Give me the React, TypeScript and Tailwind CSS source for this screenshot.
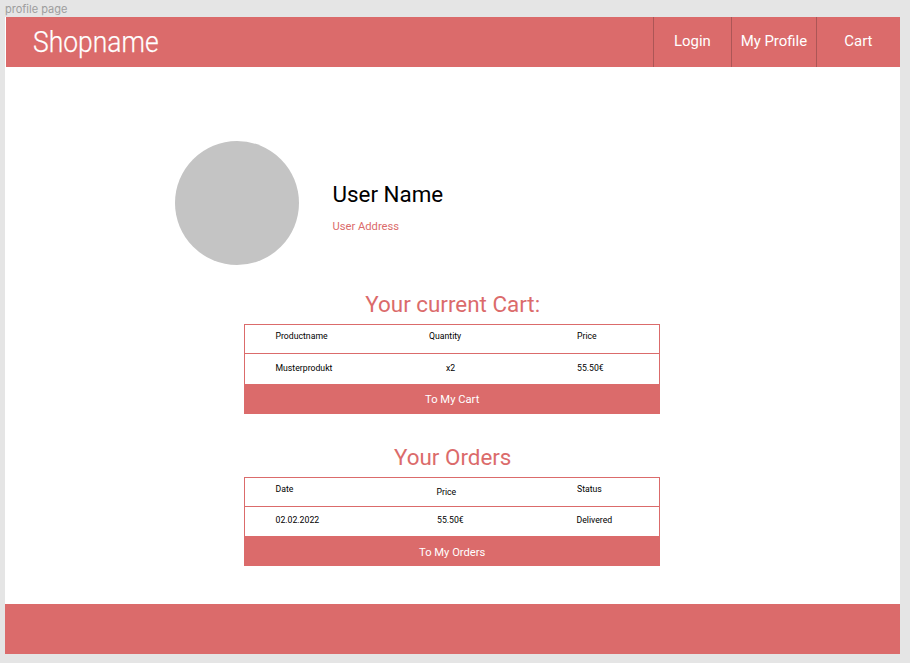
import type { ReactNode } from "react";

function Row({ children, className }: { children: ReactNode; className: string }) {
  return (
    <div className={`flex items-start pl-[30.5px] text-[8.7px] leading-[10px] text-black ${className}`}>
      {children}
    </div>
  );
}

function Header() {
  return (
    <header className="ml-[1.4px] flex h-[50px] bg-[#db6b6b] text-white">
      <h1 className="grow pl-[26.5px] pt-[7px] text-[29.9px] font-light leading-[36px]">
        <span className="inline-block origin-left scale-x-[0.885] [-webkit-text-stroke:0.25px_white]">Shopname</span>
      </h1>
      <nav className="flex text-center text-[14.95px] leading-[18px]">
        <a className="w-[78px] border-l border-[#ac5656] pr-[1px] pt-[15px]">Login</a>
        <a className="w-[85px] border-l border-[#ac5656] pr-[1px] pt-[15px]">My Profile</a>
        <a className="w-[84px] border-l border-[#ac5656] pr-[1px] pt-[15px]">Cart</a>
      </nav>
    </header>
  );
}

export default function App() {
  return (
    <div className="h-[663px] w-[910px] overflow-hidden bg-[#e5e5e5] pl-[5px] font-['Roboto',sans-serif]">
      <div className="h-[17px] pt-[3px] text-[11px] leading-[13px] text-[#9d9d9d] font-['Inter',sans-serif]">
        profile page
      </div>
      <div className="flex h-[637px] w-[895.4px] flex-col bg-white">
        <Header />
        <main className="grow">
          <section className="flex pl-[169.7px] pt-[74px]">
            <div className="size-[124.4px] rounded-full bg-[#c4c4c4]" />
            <div className="pl-[33.4px] pt-[39px]">
              <h2 className="text-[22.4px] leading-[28px] text-black">User Name</h2>
              <p className="mt-[12px] text-[11.2px] leading-[14px] text-[#db6b6b]">User Address</p>
            </div>
          </section>

          <section className="ml-[239px] mt-[24.6px] w-[416.4px]">
            <h2 className="pl-[1px] text-center text-[22.4px] leading-[28px] text-[#db6b6b]">Your current Cart:</h2>
            <div className="mt-[6px] border border-[#db6b6b]">
              <Row className="h-[28px] pt-[6px]">
                <span className="w-[153.5px]">Productname</span>
                <span className="w-[148px]">Quantity</span>
                <span>Price</span>
              </Row>
              <Row className="h-[31px] border-t border-[#db6b6b] pt-[9px]">
                <span className="w-[170.5px]">Musterprodukt</span>
                <span className="w-[131px]">x2</span>
                <span>55.50€</span>
              </Row>
              <button className="block h-[29px] w-full bg-[#db6b6b] text-[11.2px] leading-[31px] text-white">
                To My Cart
              </button>
            </div>
          </section>

          <section className="ml-[239px] mt-[29px] w-[416.4px]">
            <h2 className="pl-[1px] text-center text-[22.4px] leading-[28px] text-[#db6b6b]">Your Orders</h2>
            <div className="mt-[6px] border border-[#db6b6b]">
              <Row className="h-[28px] pt-[6px]">
                <span className="w-[161px]">Date</span>
                <span className="w-[140.5px] pt-[3px]">Price</span>
                <span>Status</span>
              </Row>
              <Row className="h-[30px] border-t border-[#db6b6b] pt-[8px]">
                <span className="w-[161.5px]">02.02.2022</span>
                <span className="w-[139.5px]">55.50€</span>
                <span>Delivered</span>
              </Row>
              <button className="block h-[29px] w-full bg-[#db6b6b] text-[11.2px] leading-[33px] text-white">
                To My Orders
              </button>
            </div>
          </section>
        </main>
        <footer className="h-[50px] bg-[#db6b6b]" />
      </div>
    </div>
  );
}
